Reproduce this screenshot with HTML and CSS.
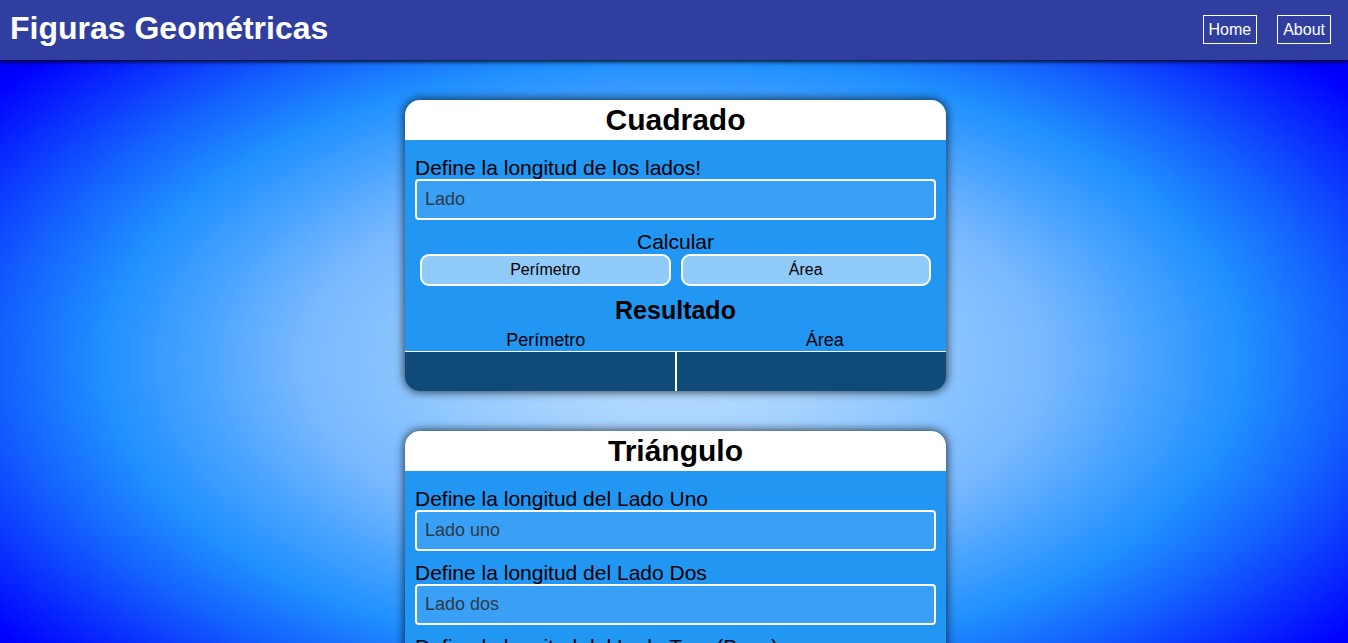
FILE: index.html
```html
<!DOCTYPE html>
<html lang="es">
<head>
<meta charset="utf-8">
<title>Figuras Geométricas</title>
<link rel="stylesheet" href="styles.css">
</head>
<body>
<header class="topbar">
  <h1 class="brand">Figuras Geométricas</h1>
  <nav class="nav">
    <a class="nav-link" href="#">Home</a>
    <a class="nav-link" href="#">About</a>
  </nav>
</header>
<main class="content">
  <section class="card">
    <h2 class="card-title">Cuadrado</h2>
    <div class="card-body">
      <div class="field">
        <label class="field-label">Define la longitud de los lados!</label>
        <input class="field-input" type="text" placeholder="Lado">
      </div>
      <p class="calc-title">Calcular</p>
      <div class="btn-row">
        <button class="btn">Perímetro</button>
        <button class="btn">Área</button>
      </div>
      <h3 class="result-title">Resultado</h3>
      <div class="result-heads">
        <span class="result-head head-left">Perímetro</span>
        <span class="result-head head-right">Área</span>
      </div>
      <div class="result-cells">
        <div class="result-cell cell-left"></div>
        <div class="result-cell"></div>
      </div>
    </div>
  </section>

  <section class="card">
    <h2 class="card-title">Triángulo</h2>
    <div class="card-body">
      <div class="field">
        <label class="field-label">Define la longitud del Lado Uno</label>
        <input class="field-input" type="text" placeholder="Lado uno">
      </div>
      <div class="field">
        <label class="field-label">Define la longitud del Lado Dos</label>
        <input class="field-input" type="text" placeholder="Lado dos">
      </div>
      <div class="field">
        <label class="field-label">Define la longitud del Lado Tres (Base)</label>
        <input class="field-input" type="text" placeholder="Lado tres (base)">
      </div>
      <p class="calc-title">Calcular</p>
      <div class="btn-row">
        <button class="btn">Perímetro</button>
        <button class="btn">Área</button>
      </div>
      <h3 class="result-title">Resultado</h3>
      <div class="result-heads">
        <span class="result-head head-left">Perímetro</span>
        <span class="result-head head-right">Área</span>
      </div>
      <div class="result-cells">
        <div class="result-cell cell-left"></div>
        <div class="result-cell"></div>
      </div>
    </div>
  </section>
</main>
</body>
</html>
```
FILE: styles.css
```css
* { box-sizing: border-box; }

html, body {
  margin: 0;
  padding: 0;
}

body {
  font-family: "Liberation Sans", Arial, sans-serif;
  color: #000;
  background-color: #0000ff;
  background-image: radial-gradient(ellipse 760px 400px at 50% 360px,
    #bde0ff 0%, #a6d2ff 20%, #8cc6ff 35%, #78b8ff 49%, #4aa4ff 62%,
    #2090ff 75%, #1462ff 88%, #0000ff 112%);
  background-attachment: fixed;
  background-repeat: no-repeat;
  min-height: 100vh;
}

.topbar {
  height: 60px;
  background: #303f9f;
  display: flex;
  align-items: center;
  justify-content: space-between;
  padding: 0 17px 0 10px;
  box-shadow: 0 2px 4px rgba(0, 0, 0, 0.85);
  position: relative;
  z-index: 2;
}

.brand {
  margin: 0;
  font-size: 32px;
  font-weight: bold;
  color: #fff;
  line-height: 1;
  padding-bottom: 4px;
}

.nav {
  display: flex;
  gap: 20px;
  margin-top: -2px;
}

.nav-link {
  color: #fff;
  text-decoration: none;
  font-size: 16px;
  line-height: 19px;
  border: 1px solid #fff;
  padding: 4px 5px 4px 5px;
}

.content {
  display: flex;
  flex-direction: column;
  align-items: center;
  gap: 40px;
  padding: 40px 0 40px 3px;
}

.card {
  width: 541px;
  border-radius: 15px;
  overflow: hidden;
  background: #2196f3;
  box-shadow: 0 0 10px 1px rgba(0, 0, 0, 0.7);
}

.card-title {
  margin: 0;
  height: 40px;
  line-height: 40px;
  background: #fff;
  text-align: center;
  font-size: 30px;
  font-weight: bold;
}

.card-body {
  padding-top: 16px;
}

.field {
  padding: 0 10px;
  margin-bottom: 10px;
}

.field-label {
  display: block;
  font-size: 21px;
  line-height: 23px;
}

.field-input {
  display: block;
  width: 100%;
  height: 41px;
  border: 2px solid #fff;
  border-radius: 4px;
  background: #39a0f5;
  font-family: "Liberation Sans", Arial, sans-serif;
  font-size: 18px;
  padding: 0 8px;
  color: #000;
  outline: none;
}

.field-input::placeholder {
  color: #2e3a46;
}

.calc-title {
  margin: 1px 0 0;
  text-align: center;
  font-size: 21px;
  line-height: 24px;
}

.btn-row {
  display: grid;
  grid-template-columns: 1fr 1fr;
  gap: 10px;
  padding: 0 15px;
}

.btn {
  height: 32px;
  border: 2px solid #fff;
  border-radius: 9px;
  background: #90caf9;
  font-family: "Liberation Sans", Arial, sans-serif;
  font-size: 16px;
  color: #000;
  padding: 0;
}

.result-title {
  margin: 10px 0 0;
  text-align: center;
  font-size: 25px;
  font-weight: bold;
  line-height: 28px;
}

.result-heads {
  display: grid;
  grid-template-columns: 1fr 1fr;
  margin-top: 5px;
}

.result-head {
  text-align: center;
  font-size: 18px;
  line-height: 22px;
}

.head-left { padding-left: 11px; }
.head-right { padding-left: 28px; }

.result-cells {
  display: grid;
  grid-template-columns: 272px 1fr;
  border-top: 1px solid #fff;
  height: 40px;
  background: #104a78;
}

.cell-left {
  border-right: 2px solid #fff;
}
```
